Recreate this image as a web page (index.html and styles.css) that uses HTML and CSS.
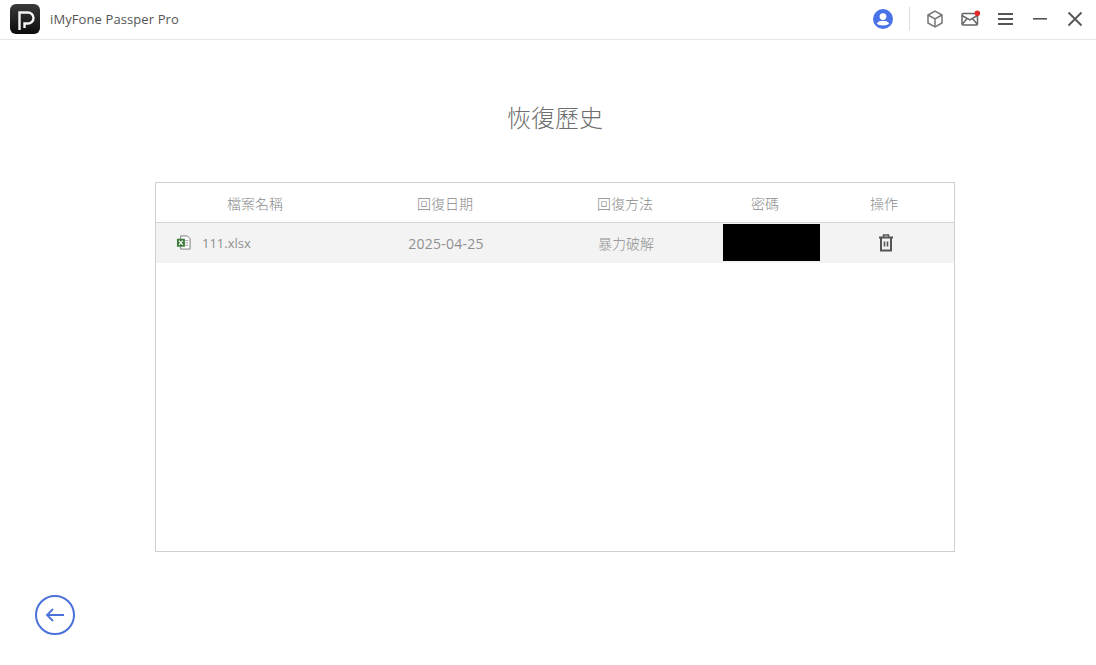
FILE: index.html
```html
<!DOCTYPE html>
<html lang="zh-Hant">
<head>
<meta charset="utf-8">
<title>iMyFone Passper Pro</title>
<link rel="stylesheet" href="styles.css">
</head>
<body>
<div class="app">
  <header class="titlebar">
    <div class="brand">
      <svg class="logo" viewBox="0 0 30 30" width="30" height="30">
        <defs><linearGradient id="lg" x1="0" y1="0" x2="0" y2="1"><stop offset="0" stop-color="#3a3a3a"/><stop offset="1" stop-color="#0c0c0c"/></linearGradient></defs>
        <rect width="30" height="30" rx="6" fill="url(#lg)"/>
        <path d="M9.500 26V8.500h8.500a5.500 5.500 0 0 1 0 11H14.500V24" fill="none" stroke="#f4f4f4" stroke-width="2.400"/>
      </svg>
      <span class="app-name">iMyFone Passper Pro</span>
    </div>
    <div class="tools">
      <svg class="ic-user" viewBox="0 0 20 20" width="20" height="20">
        <circle cx="10" cy="10" r="10" fill="#4a72e8"/>
        <circle cx="10" cy="7.600" r="3.400" fill="#fff"/>
        <path d="M3.800 14.400c1.200-2 3.600-2.700 6.200-2.700s5 .7 6.200 2.700c-.9 1.200-3.200 2-6.200 2s-5.300-.8-6.200-2z" fill="#fff"/>
      </svg>
      <span class="divider"></span>
      <svg class="ic-box" viewBox="0 0 18 18" width="18" height="18" fill="none" stroke="#777" stroke-width="1.500">
        <path d="M9 1.200 16 5v8l-7 3.800L2 13V5z"/><path d="M2 5l7 4 7-4M9 9v7.800"/>
      </svg>
      <svg class="ic-mail" viewBox="0 0 20 18" width="20" height="18" fill="none" stroke="#666" stroke-width="1.500">
        <rect x="1" y="3.500" width="15.500" height="11.500" rx="1"/><path d="M1 5.500l7.750 4.500 7.750-4.500M1 14.500l5.500-6.500M16.500 14.500l-5.500-6.500"/>
        <circle cx="16.300" cy="3.300" r="2.800" fill="#e02b2b" stroke="none"/>
      </svg>
      <svg class="ic-menu" viewBox="0 0 16 14" width="16" height="14" fill="#555">
        <rect y="1" width="15" height="2"/><rect y="6" width="15" height="2"/><rect y="11" width="15" height="2"/>
      </svg>
      <svg class="ic-min" viewBox="0 0 14 14" width="14" height="14" fill="#555"><rect y="6" width="14" height="1.600"/></svg>
      <svg class="ic-close" viewBox="0 0 16 16" width="16" height="16" stroke="#555" stroke-width="1.800"><path d="M1.500 1.500l13 13M14.500 1.500l-13 13"/></svg>
    </div>
  </header>

  <main class="content">
    <h1 class="page-title">恢復歷史</h1>
    <section class="panel">
      <div class="head-row">
        <div>檔案名稱</div>
        <div>回復日期</div>
        <div>回復方法</div>
        <div>密碼</div>
        <div>操作</div>
      </div>
      <div class="data-row">
        <div class="file-cell">
          <svg class="ic-xlsx" viewBox="0 0 16 16" width="15" height="15">
            <path d="M5 1h7l3 3v11H5z" fill="#fff" stroke="#777" stroke-width="1"/>
            <path d="M10 6h3M10 8.500h3M10 11h3" stroke="#9a9a9a" stroke-width="1"/>
            <rect x="1" y="4" width="8.500" height="8.500" fill="#3c7d3a"/>
            <path d="M3.200 6l4 4.500M7.200 6l-4 4.500" stroke="#fff" stroke-width="1.300"/>
          </svg>
          <span class="file-name">111.xlsx</span>
        </div>
        <div class="center date">2025-04-25</div>
        <div class="center method">暴力破解</div>
        <div class="center"><span class="masked"></span></div>
        <div class="center">
          <svg class="ic-trash" viewBox="0 0 14 18" width="14" height="18" fill="none" stroke="#555" stroke-width="2">
            <path d="M0 3.500h14" /><path d="M4.500 3V1h5v2" stroke-width="1.500"/>
            <path d="M2 4v12.500h10V4"/><path d="M5.500 7.500v5M8.500 7.500v5" stroke-width="1.600"/>
          </svg>
        </div>
      </div>
    </section>
    <button class="back" type="button" aria-label="返回">
      <svg viewBox="0 0 20 16" width="20" height="16" fill="none" stroke="#4a72d8" stroke-width="1.800">
        <path d="M19 8H2M8 2 2 8l6 6"/>
      </svg>
    </button>
  </main>
</div>
</body>
</html>
```
FILE: styles.css
```css
* { box-sizing: border-box; }
html, body { margin: 0; padding: 0; background: #fff; }
body {
  width: 1096px;
  height: 665px;
  overflow: hidden;
  font-family: "Open Sans", "Noto Sans CJK TC", sans-serif;
  color: #8a8a8a;
}
.app { display: flex; flex-direction: column; height: 665px; }

.titlebar {
  height: 40px;
  flex: none;
  display: flex;
  align-items: center;
  justify-content: space-between;
  border-bottom: 1px solid #e6e6e6;
  padding: 0 13px 2px 10px;
}
.brand { display: flex; align-items: center; gap: 10px; }
.logo { display: block; }
.app-name { font-size: 13px; color: #555; letter-spacing: .1px; }
.tools { display: flex; align-items: center; }
.tools svg { display: block; flex: none; }
.divider { width: 1px; height: 24px; background: #ddd; margin: 0 16px 0 16px; }
.ic-mail { margin-left: 17px; }
.ic-menu { margin-left: 17px; }
.ic-min { margin-left: 19px; }
.ic-close { margin-left: 20px; }

.content { flex: 1; display: flex; flex-direction: column; align-items: flex-start; }
.page-title {
  align-self: stretch;
  margin: 59px 0 0;
  padding-left: 14px;
  height: 38px;
  line-height: 38px;
  text-align: center;
  font-size: 24px;
  font-weight: 300;
  color: #6f6f6f;
}
.panel {
  margin: 45px 0 0 155px;
  width: 800px;
  height: 370px;
  border: 1px solid #cfcfcf;
}
.head-row {
  display: grid;
  grid-template-columns: 198px 182px 178px 102px 136px;
  height: 40px;
  align-items: center;
  text-align: center;
  font-size: 14px;
  font-weight: 300;
  color: #8a8a8a;
  border-bottom: 1px solid #d6d6d6;
}
.data-row {
  display: grid;
  grid-template-columns: 200px 180px 180px 111px 118px;
  height: 40px;
  align-items: center;
  background: #f3f3f3;
  font-size: 14px;
  color: #8f8f8f;
}
.center { display: flex; align-items: center; justify-content: center; }
.file-cell { display: flex; align-items: center; gap: 11px; padding-left: 20px; }
.file-name { font-size: 13px; }
.date { letter-spacing: .25px; }
.method { font-weight: 300; }
.masked { display: block; width: 97px; height: 37px; margin-top: -2px; background: #000; }
.ic-trash { display: block; margin-top: -1px; }
.ic-xlsx { display: block; margin-top: -2px; }

.back {
  margin: 43px 0 0 35px;
  width: 40px;
  height: 40px;
  padding: 0;
  border: 2px solid #4a72d8;
  border-radius: 50%;
  background: #fff;
  display: flex;
  align-items: center;
  justify-content: center;
}
.back svg { display: block; }
```
